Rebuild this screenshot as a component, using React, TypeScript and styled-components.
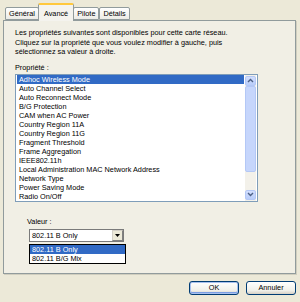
import * as React from "react";
import styled, { createGlobalStyle } from "styled-components";

const Global = createGlobalStyle`
  html, body {
    margin: 0;
    padding: 0;
    background: #ece9d8;
  }
  body {
    font-family: "Liberation Sans", Arial, sans-serif;
    font-size: 7.3px;
    color: #000;
  }
`;

const Window = styled.div`
  width: 300px;
  height: 302px;
  box-sizing: border-box;
  padding: 3px 0 0 3px;
  display: flex;
  flex-direction: column;
  background: #ece9d8;
`;

const TabStrip = styled.div`
  display: flex;
  align-items: flex-end;
  padding-left: 2px;
  height: 17px;
  position: relative;
  z-index: 1;
`;

const Tab = styled.div<{ $active?: boolean }>`
  box-sizing: border-box;
  height: ${(p) => (p.$active ? "18px" : "13px")};
  margin-bottom: ${(p) => (p.$active ? "-1px" : "0")};
  padding: 0 ${(p) => (p.$active ? "5px" : "3px")};
  display: flex;
  align-items: center;
  justify-content: center;
  border: 1px solid #919b9c;
  border-bottom: ${(p) => (p.$active ? "none" : "1px solid #919b9c")};
  border-top: ${(p) => (p.$active ? "2px solid #ffc83c" : "1px solid #919b9c")};
  border-radius: 2px 2px 0 0;
  background: ${(p) =>
    p.$active ? "#f4f3ee" : "linear-gradient(#ffffff, #ecebe6)"};
  margin-left: ${(p) => (p.$active ? "-1px" : "0")};
  margin-right: ${(p) => (p.$active ? "-1px" : "0")};
  position: relative;
  z-index: ${(p) => (p.$active ? 2 : 1)};
  white-space: nowrap;
`;

const Panel = styled.div`
  width: 293px;
  height: 254px;
  box-sizing: border-box;
  border: 1px solid #919b9c;
  box-shadow: 1px 1px 0 #d0cebf;
  background: #f1efe5;
  padding: 7px 0 0 11px;
  display: flex;
  flex-direction: column;
`;

const Intro = styled.div`
  line-height: 9.5px;
`;

const Label = styled.div<{ $indent?: number }>`
  line-height: 9px;
  margin-left: ${(p) => p.$indent ?? 0}px;
`;

const ListBox = styled.div`
  margin-top: 2px;
  width: 243px;
  height: 128px;
  box-sizing: border-box;
  border: 1px solid #7f9db9;
  background: #fff;
  display: flex;
  padding: 0 1px;
`;

const Rows = styled.div`
  flex: 1;
  overflow: hidden;
  margin-right: 1px;
`;

const Row = styled.div<{ $selected?: boolean }>`
  height: 9px;
  line-height: 9px;
  padding-left: 2px;
  white-space: nowrap;
  overflow: hidden;
  background: ${(p) => (p.$selected ? "#316ac5" : "transparent")};
  color: ${(p) => (p.$selected ? "#fff" : "#000")};
`;

const ScrollBar = styled.div`
  width: 11px;
  display: flex;
  flex-direction: column;
  background: #f3f1ea;
  padding: 1px 0;
`;

const ScrollButton = styled.div`
  height: 10px;
  box-sizing: border-box;
  border: 1px solid #b4c8f6;
  border-radius: 2px;
  background: linear-gradient(#d2defd, #b9cdfa);
  display: flex;
  align-items: center;
  justify-content: center;
`;

const Thumb = styled.div`
  height: 86px;
  box-sizing: border-box;
  border: 1px solid #b4c8f6;
  border-radius: 2px;
  background: #c6d6fc;
`;

const Track = styled.div`
  flex: 1;
`;

const ValueBlock = styled.div`
  margin-top: 15px;
  display: flex;
  flex-direction: column;
  padding-left: 12px;
`;

const Combo = styled.div`
  margin-top: 3px;
  margin-left: 2px;
  position: relative;
  width: 95px;
  height: 13px;
  box-sizing: border-box;
  border: 1px solid #7a7a7a;
  background: #fff;
  display: flex;
  align-items: center;
`;

const ComboText = styled.div`
  flex: 1;
  padding-left: 2px;
  line-height: 11px;
`;

const ComboArrow = styled.div`
  width: 11px;
  height: 11px;
  box-sizing: border-box;
  border: 1px solid #d4d0c8;
  border-right-color: #808080;
  border-bottom-color: #808080;
  background: #ece9d8;
  display: flex;
  align-items: center;
  justify-content: center;
`;

const DropList = styled.div`
  position: absolute;
  left: -1px;
  top: 14px;
  width: 97px;
  box-sizing: border-box;
  border: 1px solid #000;
  background: #fff;
`;

const Footer = styled.div`
  display: flex;
  justify-content: flex-end;
  gap: 7px;
  padding: 7px 4px 0 0;
`;

const Button = styled.div<{ $default?: boolean }>`
  width: 50px;
  height: 14px;
  box-sizing: border-box;
  border: 1px solid #003c74;
  border-radius: 3px;
  background: linear-gradient(#ffffff, #f0f0ea 70%, #d6d0c5);
  box-shadow: ${(p) =>
    p.$default ? "inset 0 0 0 1px #a8c1ee, inset 0 -1px 0 1px #7b9ee3" : "none"};
  display: flex;
  align-items: center;
  justify-content: center;
  line-height: 12px;
`;

const Chevron = ({ up }: { up?: boolean }) => (
  <svg width="7" height="5" viewBox="0 0 7 5">
    <path
      d={up ? "M1 4 L3.5 1.5 L6 4" : "M1 1 L3.5 3.5 L6 1"}
      fill="none"
      stroke="#4d6185"
      strokeWidth="1.4"
    />
  </svg>
);

const properties = [
  "Adhoc Wireless Mode",
  "Auto Channel Select",
  "Auto Reconnect Mode",
  "B/G Protection",
  "CAM when AC Power",
  "Country Region 11A",
  "Country Region 11G",
  "Fragment Threshold",
  "Frame Aggregation",
  "IEEE802.11h",
  "Local Administration MAC Network Address",
  "Network Type",
  "Power Saving Mode",
  "Radio On/Off",
];

const App = () => (
  <>
    <Global />
    <Window>
      <TabStrip>
        <Tab>Général</Tab>
        <Tab $active>Avancé</Tab>
        <Tab>Pilote</Tab>
        <Tab>Détails</Tab>
      </TabStrip>
      <Panel>
        <Intro>
          Les propriétés suivantes sont disponibles pour cette carte réseau.
          <br />
          Cliquez sur la propriété que vous voulez modifier à gauche, puis
          <br />
          sélectionnez sa valeur à droite.
        </Intro>
        <Label style={{ marginTop: 6 }}>Propriété :</Label>
        <ListBox>
          <Rows>
            {properties.map((p, i) => (
              <Row key={p} $selected={i === 0}>
                {p}
              </Row>
            ))}
          </Rows>
          <ScrollBar>
            <ScrollButton>
              <Chevron up />
            </ScrollButton>
            <Thumb />
            <Track />
            <ScrollButton>
              <Chevron />
            </ScrollButton>
          </ScrollBar>
        </ListBox>
        <ValueBlock>
          <Label>Valeur :</Label>
          <Combo>
            <ComboText>802.11 B Only</ComboText>
            <ComboArrow>
              <svg width="5" height="3" viewBox="0 0 5 3">
                <path d="M0 0 H5 L2.5 3 Z" fill="#000" />
              </svg>
            </ComboArrow>
            <DropList>
              <Row $selected>802.11 B Only</Row>
              <Row>802.11 B/G Mix</Row>
            </DropList>
          </Combo>
        </ValueBlock>
      </Panel>
      <Footer>
        <Button $default>OK</Button>
        <Button>Annuler</Button>
      </Footer>
    </Window>
  </>
);

export default App;
